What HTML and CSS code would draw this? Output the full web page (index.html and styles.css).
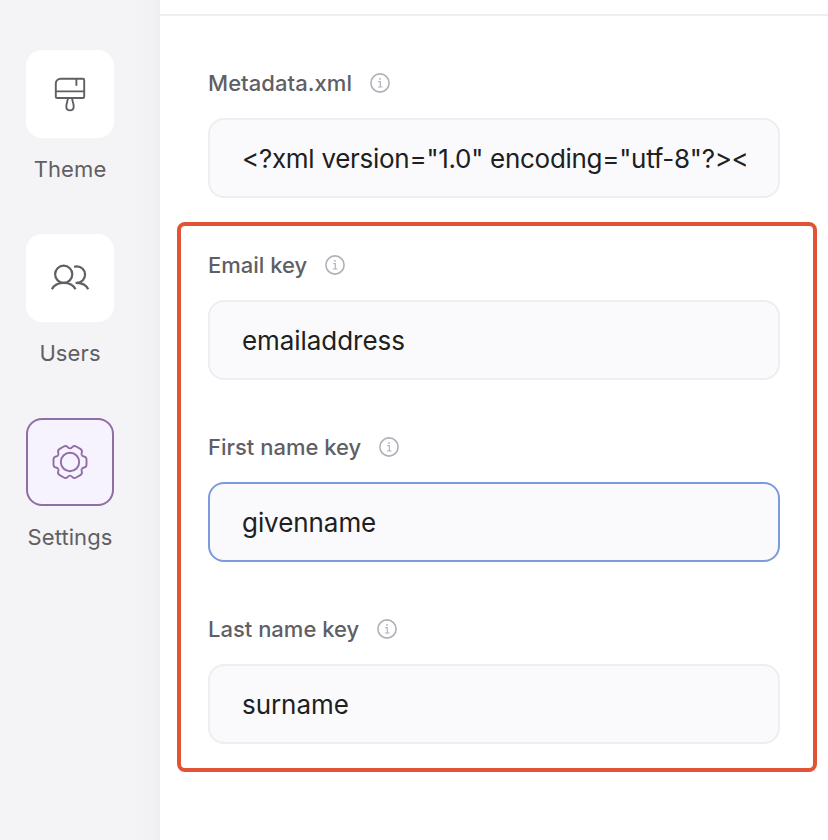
FILE: index.html
```
<!DOCTYPE html>
<html lang="en">
<head>
  <meta charset="UTF-8">
  <meta name="viewport" content="width=device-width, initial-scale=1">
  <title>Settings</title>
  <link rel="stylesheet" href="styles.css">
</head>
<body>
  <svg class="defs" width="0" height="0">
    <symbol id="info" viewBox="0 0 20 20">
      <circle cx="10" cy="10" r="9.1" />
      <path d="M8.3 8.6h2v5.4M8 14h4.5" stroke-width="1.1" />
      <circle cx="10" cy="5.9" r="0.9" fill="currentColor" stroke="none" />
    </symbol>
    <path id="tooth" d="M11.8 -6.8C12.4 -5.8 13.2 -5.7 14.4 -5.4C16 -5 16.5 -3.6 16.5 -2.4V2.4C16.5 3.6 16 5 14.4 5.4C13.2 5.7 12.4 5.8 11.8 6.8" />
  </svg>

  <nav class="sidebar">
    <a class="nav-item">
      <span class="tile">
        <svg class="icon" width="44" height="44" viewBox="0 0 44 44">
          <path d="M12.5 6.7H34.9a1.3 1.3 0 0 1 1.3 1.3V24.7a1.3 1.3 0 0 1-1.3 1.3H9.1a1.3 1.3 0 0 1-1.3-1.3V11.4a4.7 4.7 0 0 1 4.7-4.7zM7.8 19.4H36.2M28.4 6.7V13.8M19.9 26C19.9 29 18.3 31 18.3 34.2C18.3 36.8 19.9 38.4 22 38.4S25.7 36.8 25.7 34.2C25.7 31 24.1 29 24.1 26" />
        </svg>
      </span>
      <span class="nav-label">Theme</span>
    </a>
    <a class="nav-item">
      <span class="tile">
        <svg class="icon users" width="44" height="44" viewBox="0 0 44 44">
          <circle cx="15.7" cy="18.3" r="8.6" />
          <path d="M3.9 33.3C5.9 29.3 10.2 26.9 15.7 26.9S25.5 29.3 27.5 33.3" />
          <path d="M26.1 10.9C27 10.5 27.8 10.3 28.8 10.3A8.3 8.3 0 0 1 28.8 26.9H27.6M28.8 26.9C34.2 27 38.3 29.3 40.2 33.3" />
        </svg>
      </span>
      <span class="nav-label">Users</span>
    </a>
    <a class="nav-item active">
      <span class="tile">
        <svg class="icon" width="44" height="44" viewBox="-22 -22 44 44">
          <circle r="9.2" />
          <use href="#tooth" />
          <use href="#tooth" transform="rotate(60)" />
          <use href="#tooth" transform="rotate(120)" />
          <use href="#tooth" transform="rotate(180)" />
          <use href="#tooth" transform="rotate(240)" />
          <use href="#tooth" transform="rotate(300)" />
        </svg>
      </span>
      <span class="nav-label">Settings</span>
    </a>
  </nav>

  <main class="content">
    <div class="field">
      <label for="metadata" class="wide">Metadata.xml <svg class="info"><use href="#info" /></svg></label>
      <input type="text" id="metadata" class="code" value="&lt;?xml version=&quot;1.0&quot; encoding=&quot;utf-8&quot;?&gt;&lt;">
    </div>

    <div class="highlight">
      <div class="field">
        <label for="email">Email key <svg class="info"><use href="#info" /></svg></label>
        <input type="text" id="email" value="emailaddress">
      </div>
      <div class="field">
        <label for="firstName">First name key <svg class="info"><use href="#info" /></svg></label>
        <input type="text" id="firstName" class="focused" value="givenname">
      </div>
      <div class="field">
        <label for="lastName">Last name key <svg class="info"><use href="#info" /></svg></label>
        <input type="text" id="lastName" value="surname">
      </div>
    </div>
  </main>
</body>
</html>
```
FILE: styles.css
```
:root {
  --side-bg: #f4f4f6;
  --text: #5f5f64;
  --border: #eeeef2;
  --purple: #906da5;
  --orange: #e25335;
}

* {
  box-sizing: border-box;
}

body {
  margin: 0;
  height: 840px;
  display: flex;
  overflow: hidden;
  font-family: Inter, sans-serif;
  background-color: #fff;
  color: var(--text);
}

.defs {
  position: absolute;
}

.sidebar {
  width: 160px;
  padding: 50px 20px 0 0;
  display: flex;
  flex-direction: column;
  gap: 50px;
  background: linear-gradient(to right, var(--side-bg) 130px, #f2f2f4 152px, #eeeef1 160px);
}

.nav-item {
  display: flex;
  flex-direction: column;
  align-items: center;
  height: 134px;
}

.tile {
  width: 88px;
  height: 88px;
  display: flex;
  align-items: center;
  justify-content: center;
  border-radius: 16px;
  background-color: #fff;
}

.active .tile {
  border: 2px solid var(--purple);
  background-color: #f6f3fe;
  color: var(--purple);
}

.icon {
  fill: none;
  stroke: currentColor;
  stroke-width: 1.9;
}

.users {
  stroke-width: 2.2;
}

.nav-label {
  margin-top: 17px;
  font-size: 22px;
  line-height: 28px;
  letter-spacing: 0.1px;
}

.content {
  flex: 1;
  margin-top: 14px;
  padding: 48px 11px 0 17px;
  border-top: 2px solid var(--border);
}

.field {
  padding: 0 33px 0 27px;
}

.content > .field {
  padding: 0 37px 0 31px;
}

label {
  display: flex;
  align-items: center;
  gap: 18px;
  height: 38px;
  margin-bottom: 16px;
  font-size: 22px;
  font-weight: 500;
}

label.wide {
  letter-spacing: 0.06px;
}

.info {
  width: 20px;
  height: 20px;
  fill: none;
  stroke: currentColor;
  stroke-width: 1.6;
  color: #b0b0b8;
}

input {
  display: block;
  width: 100%;
  height: 80px;
  padding: 0 32px;
  border: 2px solid var(--border);
  border-radius: 16px;
  background-color: #fafafc;
  color: #202020;
  font-family: inherit;
  font-size: 26px;
  letter-spacing: -0.06px;
}

input.code {
  letter-spacing: -0.28px;
}

input.focused {
  border-color: #7a9bdc;
}

.highlight {
  height: 550px;
  margin-top: 24px;
  padding-top: 20px;
  display: flex;
  flex-direction: column;
  gap: 48px;
  border: 4px solid var(--orange);
  border-radius: 8px;
}
```
